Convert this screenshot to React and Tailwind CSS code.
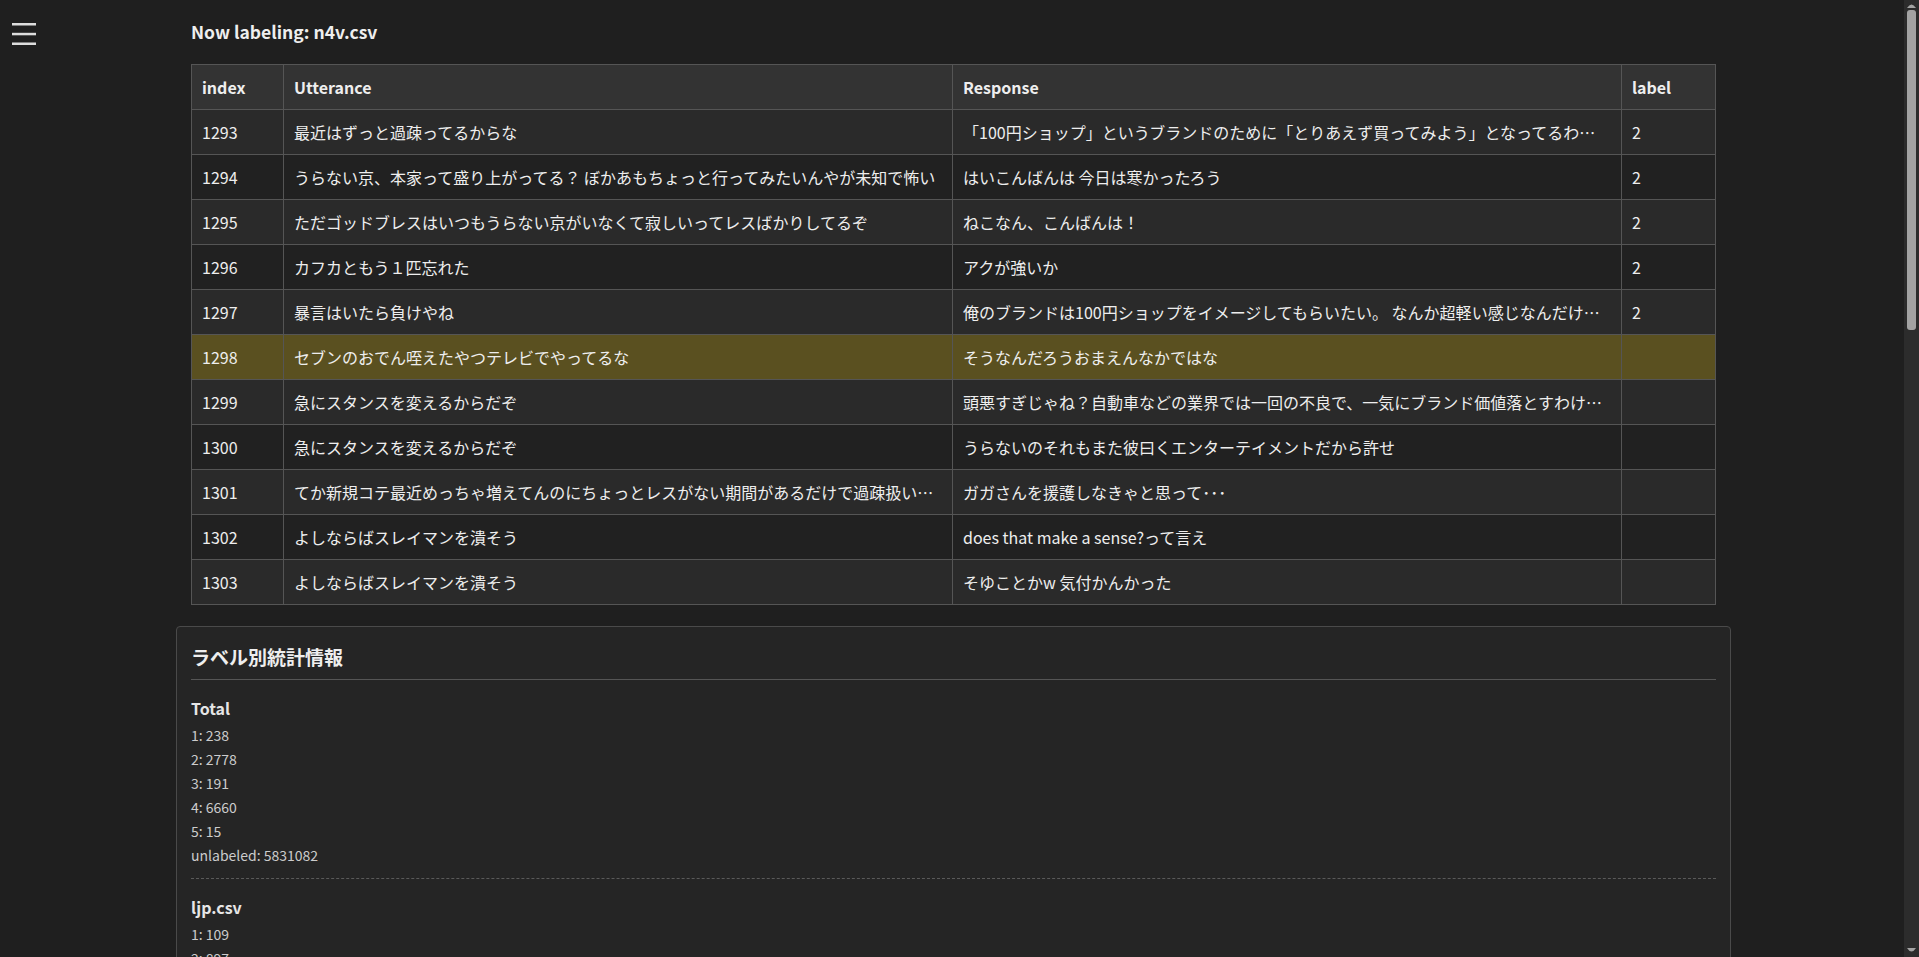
const rows = [
  { idx: 1293, u: "最近はずっと過疎ってるからな", r: "「100円ショップ」というブランドのために「とりあえず買ってみよう」となってるわけで、品質は二の次なんだよな", label: "2" },
  { idx: 1294, u: "うらない京、本家って盛り上がってる？ ぼかあもちょっと行ってみたいんやが未知で怖い", r: "はいこんばんは 今日は寒かったろう", label: "2" },
  { idx: 1295, u: "ただゴッドブレスはいつもうらない京がいなくて寂しいってレスばかりしてるぞ", r: "ねこなん、こんばんは！", label: "2" },
  { idx: 1296, u: "カフカともう１匹忘れた", r: "アクが強いか", label: "2" },
  { idx: 1297, u: "暴言はいたら負けやね", r: "俺のブランドは100円ショップをイメージしてもらいたい。 なんか超軽い感じなんだけど安心感があるやつ", label: "2" },
  { idx: 1298, u: "セブンのおでん咥えたやつテレビでやってるな", r: "そうなんだろうおまえんなかではな", label: "", active: true },
  { idx: 1299, u: "急にスタンスを変えるからだぞ", r: "頭悪すぎじゃね？自動車などの業界では一回の不良で、一気にブランド価値落とすわけだが", label: "" },
  { idx: 1300, u: "急にスタンスを変えるからだぞ", r: "うらないのそれもまた彼曰くエンターテイメントだから許せ", label: "" },
  { idx: 1301, u: "てか新規コテ最近めっちゃ増えてんのにちょっとレスがない期間があるだけで過疎扱いすんのはおかしいやろ", r: "ガガさんを援護しなきゃと思って･･･", label: "" },
  { idx: 1302, u: "よしならばスレイマンを潰そう", r: "does that make a sense?って言え", label: "" },
  { idx: 1303, u: "よしならばスレイマンを潰そう", r: "そゆことかw 気付かんかった", label: "" },
];

const stats = [
  { name: "Total", items: [["1", 238], ["2", 2778], ["3", 191], ["4", 6660], ["5", 15], ["unlabeled", 5831082]] },
  { name: "ljp.csv", items: [["1", 109], ["2", 897], ["3", 74], ["4", 2410], ["5", 6], ["unlabeled", 1204418]] },
  { name: "n4v.csv", items: [["1", 52], ["2", 1034], ["3", 48], ["4", 1877], ["5", 3], ["unlabeled", 982246]] },
  { name: "vip.csv", items: [["1", 31], ["2", 412], ["3", 29], ["4", 1105], ["5", 2], ["unlabeled", 1311570]] },
  { name: "news.csv", items: [["1", 18], ["2", 230], ["3", 22], ["4", 646], ["5", 1], ["unlabeled", 874301]] },
  { name: "livejupiter.csv", items: [["1", 14], ["2", 121], ["3", 10], ["4", 390], ["5", 2], ["unlabeled", 702115]] },
  { name: "poverty.csv", items: [["1", 9], ["2", 58], ["3", 6], ["4", 151], ["5", 1], ["unlabeled", 431990]] },
  { name: "morningcoffee.csv", items: [["1", 3], ["2", 19], ["3", 1], ["4", 52], ["5", 0], ["unlabeled", 211774]] },
  { name: "gamerpg.csv", items: [["1", 2], ["2", 7], ["3", 1], ["4", 29], ["5", 0], ["unlabeled", 92668]] },
];

function Hamburger() {
  return (
    <svg width="24" height="24" viewBox="0 0 24 24" className="block">
      <rect x="0" y="1" width="24" height="2.5" fill="#dddddd" />
      <rect x="0" y="10.8" width="24" height="2.5" fill="#dddddd" />
      <rect x="0" y="20.5" width="24" height="2.5" fill="#dddddd" />
    </svg>
  );
}

// Window scrollbar, drawn since the headless browser hides the native one
function ScrollBar() {
  return (
    <div className="fixed right-0 top-0 h-screen w-[15px] bg-[#2c2c2c] flex flex-col items-center">
      <svg width="9" height="6" viewBox="0 0 9 6" className="mt-[2px]">
        <path d="M0 6 Q4.5 -1 9 6 Z" fill="#a3a3a3" />
      </svg>
      <div className="mt-[2px] w-[9px] h-[320px] rounded-[3px] bg-[#a3a3a3]" />
      <div className="flex-1" />
      <svg width="9" height="6" viewBox="0 0 9 6" className="mb-[3px]">
        <path d="M0 0 Q4.5 7 9 0 Z" fill="#a3a3a3" />
      </svg>
    </div>
  );
}

export default function App() {
  return (
    <div className="h-screen overflow-y-scroll bg-[#1f1f1f] text-[#eeeeee] font-['Noto_Sans_CJK_JP','Noto_Sans',sans-serif]">
      <div className="relative">
        {/* Sidebar toggle */}
        <div className="absolute left-[12px] top-[22px]">
          <Hamburger />
        </div>

        <main className="ml-[176px] w-[1555px] pt-[20px] pb-[40px]">
          <div className="px-[15px]">
            <h1 className="text-[17.5px] leading-[24px] font-bold">Now labeling: n4v.csv</h1>

            <table className="mt-[20px] w-[1524px] table-fixed border-collapse text-[16px]">
              <colgroup>
                <col className="w-[92px]" />
                <col className="w-[669px]" />
                <col className="w-[669px]" />
                <col className="w-[94px]" />
              </colgroup>
              <thead>
                <tr className="bg-[#333333]">
                  {["index", "Utterance", "Response", "label"].map((h) => (
                    <th key={h} className="h-[45px] border border-[#555555] px-[10px] text-left font-bold">
                      {h}
                    </th>
                  ))}
                </tr>
              </thead>
              <tbody>
                {rows.map((row, i) => (
                  <tr
                    key={row.idx}
                    className={row.active ? "bg-[#5a5020]" : i % 2 === 0 ? "bg-[#2a2a2a]" : "bg-[#212121]"}
                  >
                    <td className="h-[45px] border border-[#555555] px-[10px] whitespace-nowrap overflow-hidden">{row.idx}</td>
                    <td className="h-[45px] border border-[#555555] px-[10px] whitespace-nowrap overflow-hidden text-ellipsis">{row.u}</td>
                    <td className="h-[45px] border border-[#555555] px-[10px] whitespace-nowrap overflow-hidden text-ellipsis">{row.r}</td>
                    <td className="h-[45px] border border-[#555555] px-[10px] whitespace-nowrap overflow-hidden">{row.label}</td>
                  </tr>
                ))}
              </tbody>
            </table>
          </div>

          {/* Stats card */}
          <section className="mt-[21px] rounded-[4px] border border-[#4a4a4a] bg-[#252525] px-[14px] pt-[15px] pb-[20px]">
            <h2 className="text-[19px] leading-[30px] font-bold pb-[7px] border-b border-[#555555]">ラベル別統計情報</h2>
            {stats.map((s, i) => (
              <div
                key={s.name}
                className={
                  "pt-[16px] pb-[11px] " + (i < stats.length - 1 ? "border-b border-dashed border-[#5a5a5a]" : "")
                }
              >
                <h3 className="text-[16px] leading-[24px] font-bold text-[#e6e6e6]">{s.name}</h3>
                <ul className="mt-[3px] text-[14px] leading-[24px] text-[#cccccc]">
                  {s.items.map(([k, v]) => (
                    <li key={k}>
                      {k}: {v}
                    </li>
                  ))}
                </ul>
              </div>
            ))}
          </section>
        </main>
      </div>
      <ScrollBar />
    </div>
  );
}
